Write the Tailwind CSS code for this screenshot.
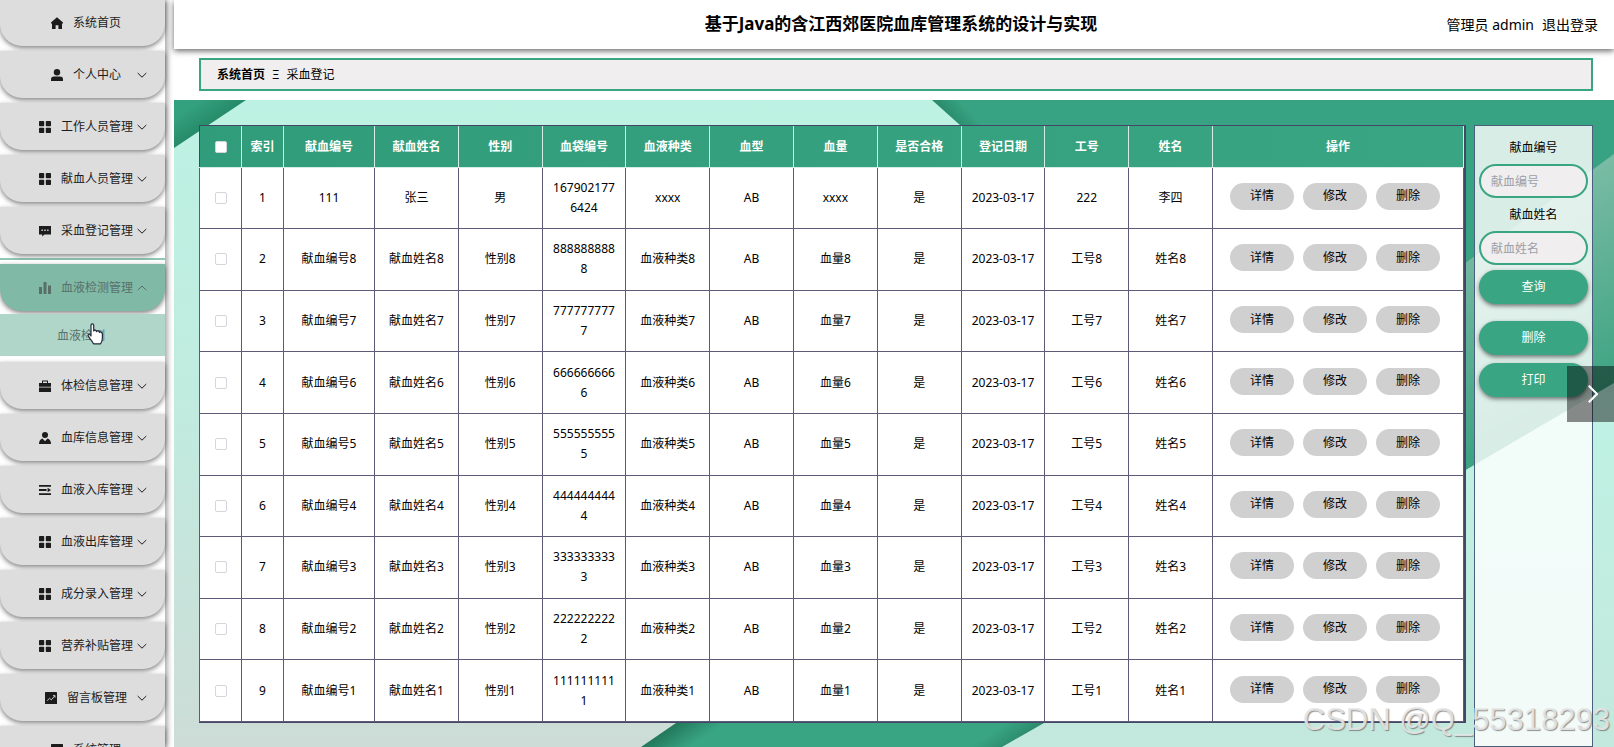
<!DOCTYPE html>
<html lang="zh-CN">
<head>
<meta charset="utf-8">
<title>基于Java的含江西郊医院血库管理系统的设计与实现</title>
<script src="https://cdn.jsdelivr.net/npm/@tailwindcss/browser@4"></script>
</head>
<body class="flex h-screen overflow-hidden bg-white font-['Noto_Sans','Noto_Sans_CJK_SC',sans-serif] text-xs text-black">

<svg class="hidden" xmlns="http://www.w3.org/2000/svg">
  <symbol id="i-home" viewBox="0 0 12 12"><path fill="currentColor" d="M6 .3 0 5.6v.9h1V12h3.6V8.2h2.8V12H11V6.500h1v-.9z"/></symbol>
  <symbol id="i-user" viewBox="0 0 12 12"><circle cx="6" cy="3.200" r="3.200" fill="currentColor"/><path fill="currentColor" d="M0 12V10.200Q0 7.400 3 7.400H9Q12 7.400 12 10.200V12z"/></symbol>
  <symbol id="i-grid" viewBox="0 0 12 12"><g fill="currentColor"><rect width="5.200" height="5.200" rx=".8"/><rect x="6.800" width="5.200" height="5.200" rx=".8"/><rect y="6.800" width="5.200" height="5.200" rx=".8"/><rect x="6.800" y="6.800" width="5.200" height="5.200" rx=".8"/></g></symbol>
  <symbol id="i-chat" viewBox="0 0 12 12"><path fill="currentColor" fill-rule="evenodd" d="M0 1H12V9.500H5.500L3.200 11.600V9.500H0zM2.500 4.600v1.300h1.300V4.600zM5.300 4.600v1.300h1.400V4.600zM8.200 4.600v1.300h1.300V4.600z"/></symbol>
  <symbol id="i-bars" viewBox="0 0 12 12"><path fill="currentColor" d="M0 5h3v7H0zM4.500 0h3v12h-3zM9 3.500h3V12H9z"/></symbol>
  <symbol id="i-case" viewBox="0 0 12 12"><path fill="currentColor" fill-rule="evenodd" d="M3 3V.600H9V3h3V6.800H0V3zM4 1.600V3H8V1.600zM0 7.600H12V12H0z"/></symbol>
  <symbol id="i-person" viewBox="0 0 12 12"><circle cx="6" cy="3" r="3" fill="currentColor"/><path fill="currentColor" d="M0 12Q0 7.800 3.500 6.600L6 9.200 8.500 6.600Q12 7.800 12 12z"/></symbol>
  <symbol id="i-list" viewBox="0 0 12 12"><path fill="currentColor" d="M0 1H12V2.800H0zM0 5.100H7.600V6.900H0zM8.600 3.800 12 6 8.600 8.200zM0 9.200H12V11H0z"/></symbol>
  <symbol id="i-chart" viewBox="0 0 12 12"><rect width="12" height="12" rx=".6" fill="currentColor"/><path fill="none" stroke="#ddd" stroke-width=".9" d="M2.200 8.600 4.600 6.300 6.300 7.800 9.800 3.800M8 3.600h2v2"/></symbol>
  <symbol id="i-down" viewBox="0 0 10 10"><path fill="none" stroke="currentColor" d="M.700 3 5 7.200 9.300 3"/></symbol>
  <symbol id="i-up" viewBox="0 0 10 10"><path fill="none" stroke="currentColor" d="M.700 7.200 5 3 9.300 7.200"/></symbol>
</svg>

<nav class="relative z-10 w-[165px] shrink-0 bg-white text-[#1c1c1c] shadow-[2px_0_6px_rgba(0,0,0,0.4)]">
  <ul id="menu-a" class="-mt-px flex flex-col gap-[5px]"></ul>
  <div class="mt-1 border-t-2 border-[#8fc7b4] pt-1 text-[#59706a]">
    <button class="flex h-[47px] w-full items-center rounded-b-[22px] bg-[#80b9a6] pl-[35px] shadow-[0_2px_5px_rgba(0,0,0,0.5)]">
      <span class="flex flex-1 items-center justify-center gap-[10px] whitespace-nowrap"><svg class="size-3"><use href="#i-bars"/></svg>血液检测管理</span>
      <svg class="mr-[18px] size-[10px]"><use href="#i-up"/></svg>
    </button>
    <div class="relative mt-[3px]">
      <a href="#" class="flex h-[42px] items-center bg-[#afd6c9] pt-[2px] pl-[57px]">血液检测</a>
      <svg class="absolute top-[9px] left-[87px] h-[22px] w-[17px]" viewBox="0 0 17 22"><path fill="#fff" stroke="#222a38" stroke-width="1.200" stroke-linejoin="round" d="M4 13V2.200Q4 .8 5.300.8T6.700 2.200V8Q7.200 6.900 8.300 7.100T9.500 8.600Q10 7.600 11.200 7.900T12.400 9.500Q13 8.700 14 9.100T15.400 11V15Q15.400 18 13.600 20.800H6.500Q5.200 18.500 3 15.700L1.300 13.200Q.7 12 1.700 11.500T4 13z"/></svg>
    </div>
  </div>
  <ul id="menu-b" class="mt-[6px] flex flex-col gap-[5px]"></ul>
</nav>

<main class="ml-[9px] flex min-w-0 flex-1 flex-col">
  <header class="relative z-10 grid h-[49px] shrink-0 grid-cols-[1fr_auto_1fr] items-center bg-white pr-4 shadow-[0_2px_6px_rgba(0,0,0,0.6)]">
    <h1 class="col-start-2 pl-[30px] text-[17px] font-bold">基于Java的含江西郊医院血库管理系统的设计与实现</h1>
    <div class="flex justify-end gap-2 text-sm"><span>管理员 admin</span><a href="#">退出登录</a></div>
  </header>

  <nav class="mt-[9px] mr-[21px] mb-[9px] ml-[25px] flex h-[33px] shrink-0 items-center gap-[7px] border-2 border-[#3aa583] bg-[#f0eeee] pl-4">
    <a href="#" class="font-bold">系统首页</a><span>Ξ</span><span>采血登记</span>
  </nav>

  <section class="relative flex min-h-0 flex-1 items-start gap-2 pt-[25px] pr-[21px] pl-[25px]">
    <svg class="absolute inset-0 size-full" viewBox="0 0 1440 647" preserveAspectRatio="none">
      <defs>
        <linearGradient id="mint" x1="0" y1="0" x2="0" y2="1"><stop offset="0" stop-color="#bdf2e3"/><stop offset=".45" stop-color="#c0ecdf"/><stop offset="1" stop-color="#cddcd7"/></linearGradient>
        <linearGradient id="mint2" x1="0" y1="0" x2="0" y2="1"><stop offset="0" stop-color="#bef3e4"/><stop offset="1" stop-color="#c3e8dd"/></linearGradient>
        <linearGradient id="band" gradientUnits="userSpaceOnUse" x1="1340" y1="110" x2="1440" y2="300"><stop offset="0" stop-color="#79bba4"/><stop offset="1" stop-color="#3aa280"/></linearGradient>
        <linearGradient id="corner" gradientUnits="userSpaceOnUse" x1="8" y1="12" x2="22" y2="33"><stop offset="0" stop-color="#34a17e"/><stop offset="1" stop-color="#268b69"/></linearGradient>
        <linearGradient id="stripe" gradientUnits="userSpaceOnUse" x1="490" y1="632" x2="606" y2="802"><stop offset="0" stop-color="#23795c"/><stop offset=".13" stop-color="#39a583"/><stop offset=".9" stop-color="#39a583"/><stop offset="1" stop-color="#2d8c6d"/></linearGradient>
        <linearGradient id="field" gradientUnits="userSpaceOnUse" x1="758" y1="0" x2="774" y2="-14"><stop offset="0" stop-color="#288a69"/><stop offset="1" stop-color="#38a382"/></linearGradient>
      </defs>
      <rect width="1440" height="647" fill="url(#mint)"/>
      <path d="M0 0H72L0 48z" fill="url(#corner)"/>
      <path d="M758 0H1440V290L1205 400z" fill="url(#field)"/>
      <path d="M1440 54 1200 230V420L1292 370 1440 283z" fill="url(#band)"/>
      <path d="M1440 283 1292 370 900 600 828 647H1440z" fill="url(#mint2)"/>
      <path d="M502 623 467 647H828L870 623 900 600H536z" fill="url(#stripe)"/>
    </svg>

    <div class="relative min-w-0 flex-1 border-t border-r-2 border-b border-[#454566]">
      <table class="h-[596px] w-full table-fixed border-collapse bg-white text-center leading-5">
        <colgroup>
          <col class="w-[42px]"><col class="w-[42px]"><col class="w-[91px]">
          <col class="w-[6.63%]"><col class="w-[6.63%]"><col class="w-[6.63%]"><col class="w-[6.63%]"><col class="w-[6.63%]"><col class="w-[6.63%]"><col class="w-[6.63%]"><col class="w-[6.63%]"><col class="w-[6.63%]"><col class="w-[6.63%]">
          <col>
        </colgroup>
        <thead><tr id="head" class="h-[41px] bg-linear-to-r from-[#319c7a] to-[#39a583] text-white"></tr></thead>
        <tbody id="rows"></tbody>
      </table>
    </div>

    <form class="relative flex w-[119px] shrink-0 flex-col self-stretch border border-[#4a5f7c] bg-white/80 px-1 pt-3 text-center">
      <label for="code" class="leading-5">献血编号</label>
      <input id="code" type="text" placeholder="献血编号" class="mt-[6px] h-[34px] w-full rounded-full border-2 border-[#3aa583] bg-[#f0eeee] px-[10px] placeholder:text-[#9ba0a8]">
      <label for="name" class="mt-[7px] leading-5">献血姓名</label>
      <input id="name" type="text" placeholder="献血姓名" class="mt-[6px] h-[34px] w-full rounded-full border-2 border-[#3aa583] bg-[#f0eeee] px-[10px] placeholder:text-[#9ba0a8]">
      <button type="button" class="mt-[5px] h-[34px] rounded-full bg-[#3aa583] text-white shadow-[0_2px_4px_rgba(0,0,0,0.5)]">查询</button>
      <button type="button" class="mt-[17px] h-[34px] rounded-full bg-[#3aa583] text-white shadow-[0_2px_4px_rgba(0,0,0,0.5)]">删除</button>
      <button type="button" class="mt-2 h-[34px] rounded-full bg-[#3aa583] text-white shadow-[0_2px_4px_rgba(0,0,0,0.5)]">打印</button>
    </form>
  </section>
</main>

<button aria-label="下一张" class="absolute top-[366px] right-0 z-20 flex h-14 w-[47px] items-center justify-center bg-black/45 pl-1">
  <svg class="h-[18px] w-[10px]" viewBox="0 0 10 18"><path fill="none" stroke="#fff" stroke-width="2" d="M.8.800 9 9 .8 17.200"/></svg>
</button>
<div class="pointer-events-none absolute right-1 bottom-3 z-20 font-['Liberation_Sans',sans-serif] text-[31px] leading-none whitespace-nowrap text-[#e8e8e8]/90 [text-shadow:1px_1px_1px_rgba(100,100,100,0.7)]">CSDN @Q_55318293</div>

<script>
  const item = ([icon, label, plain]) => `<li><button class="flex h-[47px] w-full items-center rounded-b-[22px] bg-[#ddd] pl-[35px] shadow-[0_2px_5px_rgba(0,0,0,0.5)]">
    <span class="flex flex-1 items-center justify-center gap-[10px] whitespace-nowrap"><svg class="size-3"><use href="#i-${icon}"/></svg>${label}</span>
    <svg class="mr-[18px] size-[10px]">${plain ? '' : '<use href="#i-down"/>'}</svg></button></li>`;
  document.getElementById('menu-a').innerHTML = [['home','系统首页',true],['user','个人中心'],['grid','工作人员管理'],['grid','献血人员管理'],['chat','采血登记管理']].map(item).join('');
  document.getElementById('menu-b').innerHTML = [['case','体检信息管理'],['person','血库信息管理'],['list','血液入库管理'],['grid','血液出库管理'],['grid','成分录入管理'],['grid','营养补贴管理'],['chart','留言板管理'],['chart','系统管理']].map(item).join('');

  const box = label => `<input type="checkbox" aria-label="${label}" class="block mx-auto size-3 appearance-none rounded-[2px] border border-[#d4d6dc] bg-white">`;
  const heads = [box('全选'),'索引','献血编号','献血姓名','性别','血袋编号','血液种类','血型','血量','是否合格','登记日期','工号','姓名','操作'];
  document.getElementById('head').innerHTML = heads.map(h => `<th class="border-r border-b border-[#d5ebe3] pt-px font-bold first:border-l first:border-l-[#454566]">${h}</th>`).join('');

  const data = [['111','张三','男','1679021776424','xxxx','AB','xxxx','是','2023-03-17','222','李四']];
  for (let n = 8; n >= 1; n--) data.push(['献血编号'+n,'献血姓名'+n,'性别'+n,String(n).repeat(10),'血液种类'+n,'AB','血量'+n,'是','2023-03-17','工号'+n,'姓名'+n]);
  const act = t => `<button class="h-[27px] w-16 rounded-full bg-[#d0d0d0]">${t}</button>`;
  document.getElementById('rows').innerHTML = data.map((r, i) =>
    '<tr>' + [box('选择第' + (i + 1) + '行'), i + 1, ...r, `<div class="flex gap-[9px] pb-[3px] pl-2">${['详情','修改','删除'].map(act).join('')}</div>`]
      .map(c => `<td class="border border-t-0 border-[#5d5b78] px-[9px] break-all first:px-0 [&:nth-child(11)]:px-0">${c}</td>`).join('') + '</tr>').join('');
</script>
</body>
</html>
